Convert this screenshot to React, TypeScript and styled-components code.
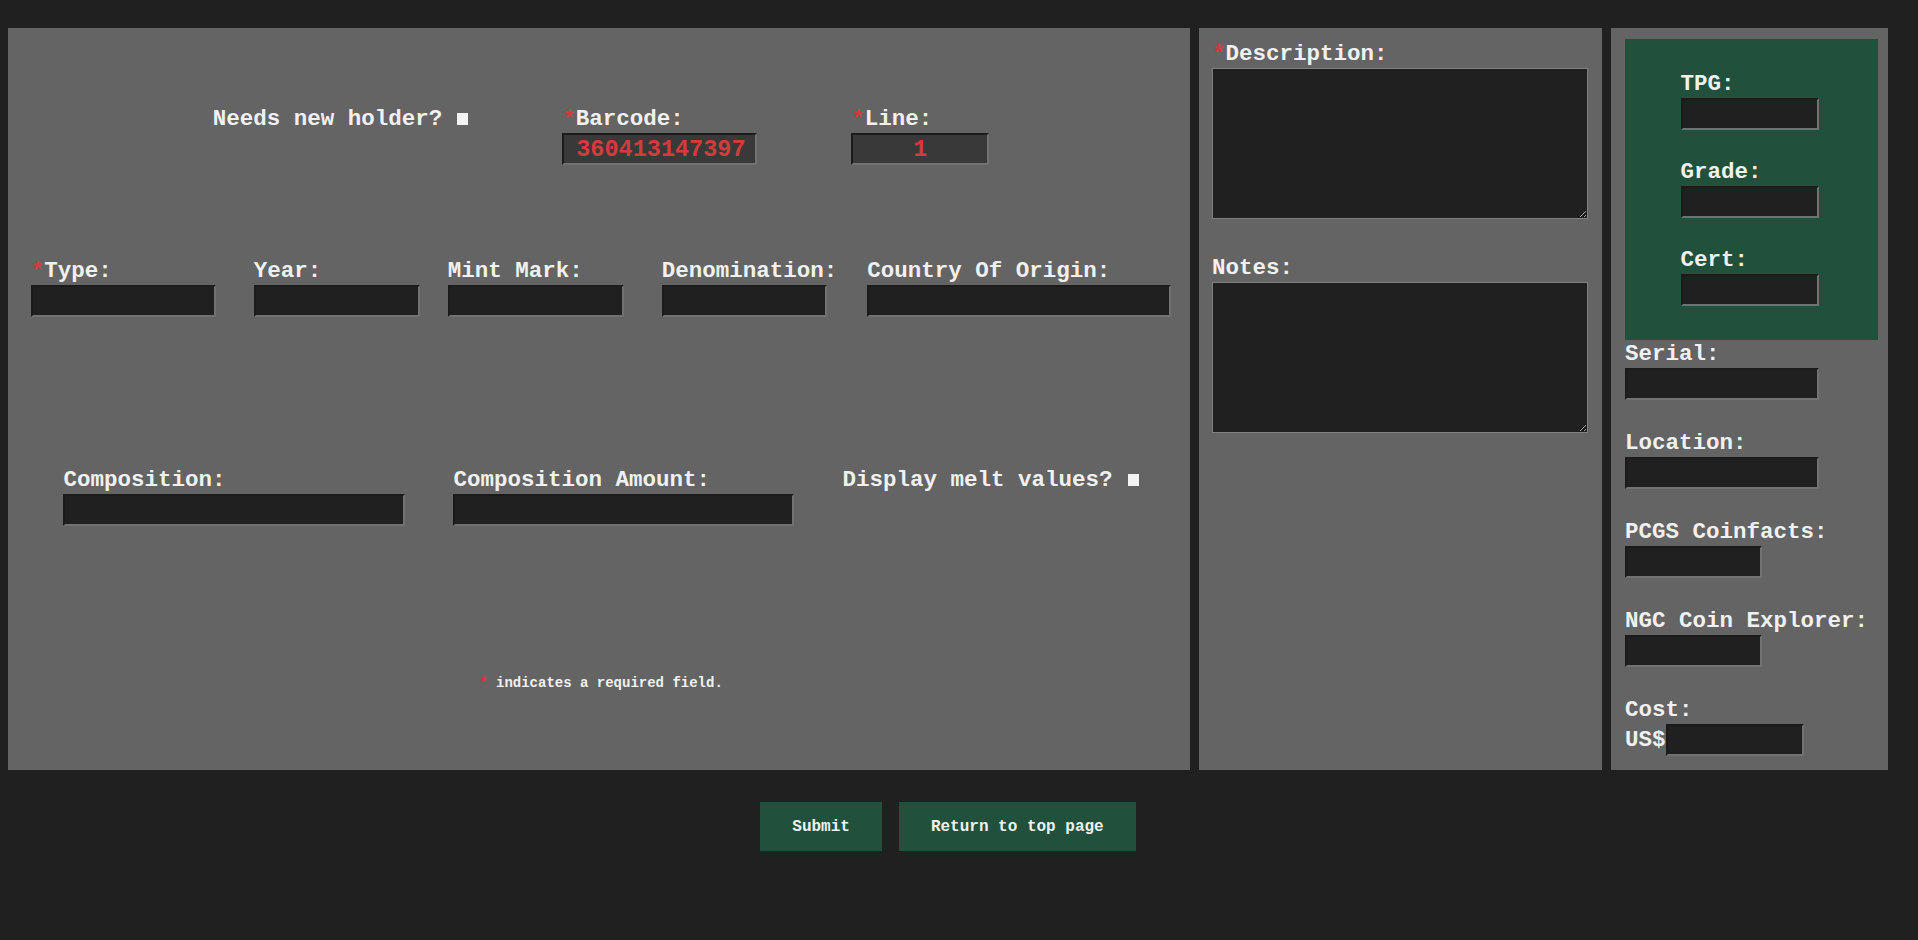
import React from "react";
import styled, { createGlobalStyle } from "styled-components";

const GlobalStyle = createGlobalStyle`
  html, body { margin: 0; padding: 0; background: #202020; }
  body {
    font-family: "Liberation Mono", "DejaVu Sans Mono", monospace;
    color: #f1f1f1;
  }
  * { box-sizing: border-box; }
`;

const Page = styled.div`
  width: 1918px;
  height: 940px;
  padding: 28px 0 0 8px;
  overflow: hidden;
`;

const Container = styled.div`
  width: 1880px;
  display: flex;
  flex-direction: column;
`;

const Panels = styled.div`
  display: flex;
  gap: 9px;
  height: 742px;
`;

const Panel = styled.section<{ $w: number }>`
  width: ${(p) => p.$w}px;
  flex: none;
  background: #646464;
`;

const MainPanel = styled(Panel)`
  display: flex;
  flex-direction: column;
  align-items: center;
  padding: 81px 0 0 4px;
`;

const Row = styled.div<{ $gap: number; $top: number }>`
  display: flex;
  align-items: flex-start;
  gap: ${(p) => p.$gap}px;
  margin-top: ${(p) => p.$top}px;
`;

const Field = styled.div<{ $ml?: number }>`
  display: flex;
  flex-direction: column;
  margin-left: ${(p) => p.$ml ?? 0}px;
`;

const Label = styled.label`
  display: block;
  height: 24px;
  font-size: 22.5px;
  line-height: 20px;
  font-weight: 700;
  white-space: nowrap;
  color: #f1f1f1;
`;

const Req = styled.span`
  color: #d23b3b;
`;

const CheckLabel = styled.label`
  display: flex;
  align-items: flex-start;
  gap: 15px;
  height: 24px;
  font-size: 22.5px;
  line-height: 20px;
  font-weight: 700;
  white-space: nowrap;
`;

const Check = styled.input`
  appearance: none;
  -webkit-appearance: none;
  width: 11px;
  height: 12px;
  margin: 4px 0 0 0;
  border: none;
  background: #f4f4f4;
  flex: none;
`;

const TextInput = styled.input<{ $w: number; $ro?: boolean; $center?: boolean }>`
  width: ${(p) => p.$w}px;
  height: 32px;
  margin: 0;
  padding: ${(p) => (p.$center ? "0 4px" : "0 2px 0 12px")};
  background: ${(p) => (p.$ro ? "#393939" : "#202020")};
  border-style: solid;
  border-width: 2px;
  border-color: #1b1b1b #727272 #727272 #1b1b1b;
  color: #d43c3c;
  font-family: inherit;
  font-weight: 700;
  font-size: 23.5px;
  text-align: ${(p) => (p.$center ? "center" : "left")};
  outline: none;
`;

const Footnote = styled.p`
  margin: 149px 0 0 0;
  font-size: 14px;
  line-height: 16px;
  font-weight: 700;
  color: #f1f1f1;
`;

const DescPanel = styled(Panel)`
  padding: 16px 0 0 13px;
  display: flex;
  flex-direction: column;
`;

const TextArea = styled.textarea`
  display: block;
  width: 376px;
  height: 151px;
  margin: 0;
  background: #202020;
  border: 1px solid #808080;
  color: #f1f1f1;
  font-family: inherit;
  outline: none;
  resize: both;
`;

const Spaced = styled.div<{ $top: number }>`
  margin-top: ${(p) => p.$top}px;
`;

const SidePanel = styled(Panel)`
  padding: 11px 0 0 14px;
  display: flex;
  flex-direction: column;
`;

const GreenBox = styled.div`
  width: 253px;
  height: 301px;
  background: #21513d;
  display: flex;
  flex-direction: column;
  align-items: center;
  gap: 32px;
  padding: 35px 4px 0 0;
`;

const SideFields = styled.div`
  display: flex;
  flex-direction: column;
  gap: 33px;
  margin-top: 4px;
`;

const CostRow = styled.div`
  display: flex;
  align-items: center;
  font-size: 22.5px;
  line-height: 24px;
  font-weight: 700;
`;

const ButtonRow = styled.div`
  display: flex;
  justify-content: center;
  gap: 17px;
  margin-top: 32px;
`;

const Button = styled.button`
  height: 49px;
  padding: 0 32px;
  background: #21513d;
  color: #f1f1f1;
  border: none;
  font-family: inherit;
  font-size: 16px;
  font-weight: 700;
  cursor: pointer;
`;

export default function App() {
  return (
    <Page>
      <GlobalStyle />
      <Container>
        <Panels>
          <MainPanel $w={1182}>
            <Row $gap={94} $top={0}>
              <CheckLabel>
                Needs new holder?
                <Check type="checkbox" />
              </CheckLabel>
              <Field>
                <Label>
                  <Req>*</Req>Barcode:
                </Label>
                <TextInput $w={195} $ro readOnly defaultValue="360413147397" />
              </Field>
              <Field>
                <Label>
                  <Req>*</Req>Line:
                </Label>
                <TextInput $w={138} $ro $center readOnly defaultValue="1" />
              </Field>
            </Row>
            <Row $gap={0} $top={96}>
              <Field>
                <Label>
                  <Req>*</Req>Type:
                </Label>
                <TextInput $w={185} />
              </Field>
              <Field $ml={38}>
                <Label>Year:</Label>
                <TextInput $w={166} />
              </Field>
              <Field $ml={28}>
                <Label>Mint Mark:</Label>
                <TextInput $w={176} />
              </Field>
              <Field $ml={38}>
                <Label>Denomination:</Label>
                <TextInput $w={165} />
              </Field>
              <Field $ml={30}>
                <Label>Country Of Origin:</Label>
                <TextInput $w={304} />
              </Field>
            </Row>
            <Row $gap={48} $top={153}>
              <Field>
                <Label>Composition:</Label>
                <TextInput $w={342} />
              </Field>
              <Field>
                <Label>Composition Amount:</Label>
                <TextInput $w={341} />
              </Field>
              <CheckLabel>
                Display melt values?
                <Check type="checkbox" />
              </CheckLabel>
            </Row>
            <Footnote>
              <Req>*</Req> indicates a required field.
            </Footnote>
          </MainPanel>

          <DescPanel $w={403}>
            <Label>
              <Req>*</Req>Description:
            </Label>
            <TextArea />
            <Spaced $top={39}>
              <Label>Notes:</Label>
              <TextArea />
            </Spaced>
          </DescPanel>

          <SidePanel $w={277}>
            <GreenBox>
              <Field>
                <Label>TPG:</Label>
                <TextInput $w={138} />
              </Field>
              <Field>
                <Label>Grade:</Label>
                <TextInput $w={138} />
              </Field>
              <Field>
                <Label>Cert:</Label>
                <TextInput $w={138} />
              </Field>
            </GreenBox>
            <SideFields>
              <Field>
                <Label>Serial:</Label>
                <TextInput $w={194} />
              </Field>
              <Field>
                <Label>Location:</Label>
                <TextInput $w={194} />
              </Field>
              <Field>
                <Label>PCGS Coinfacts:</Label>
                <TextInput $w={137} />
              </Field>
              <Field>
                <Label>NGC Coin Explorer:</Label>
                <TextInput $w={137} />
              </Field>
              <Field>
                <Label>Cost:</Label>
                <CostRow>
                  US$
                  <TextInput $w={138} />
                </CostRow>
              </Field>
            </SideFields>
          </SidePanel>
        </Panels>
        <ButtonRow>
          <Button type="button">Submit</Button>
          <Button type="button">Return to top page</Button>
        </ButtonRow>
      </Container>
    </Page>
  );
}
